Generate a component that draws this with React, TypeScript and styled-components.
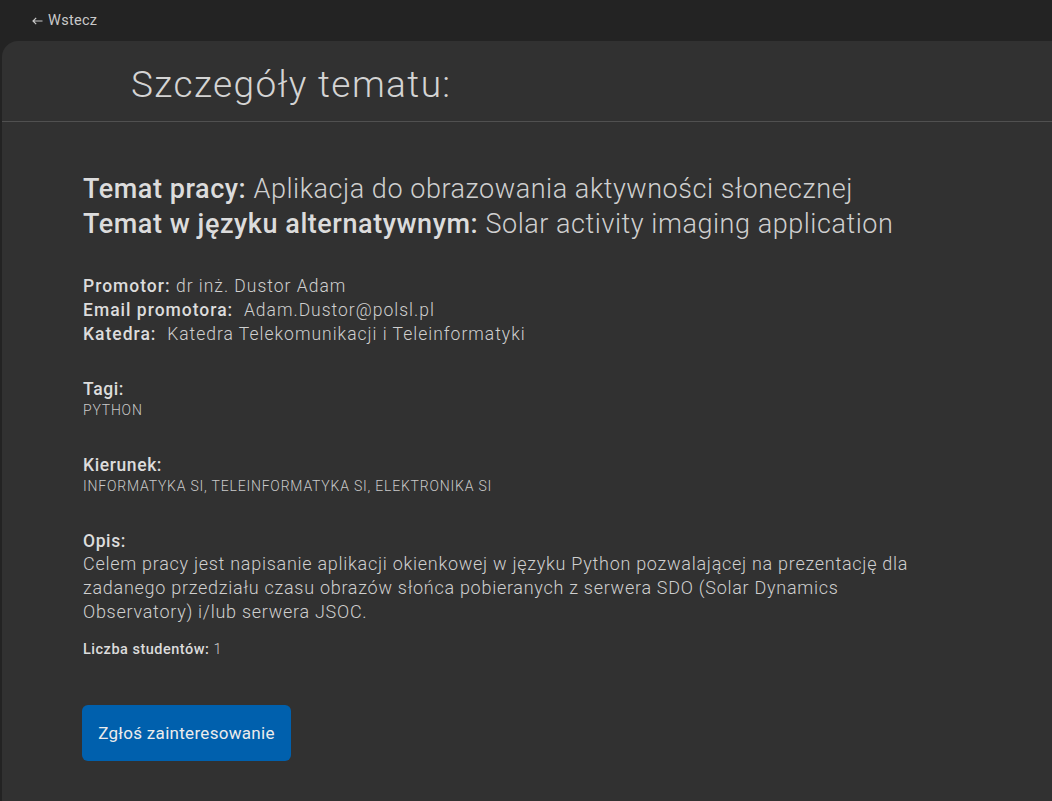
import React from "react";
import styled, { createGlobalStyle } from "styled-components";

const GlobalStyle = createGlobalStyle`
  html, body {
    margin: 0;
    padding: 0;
    background: #232323;
    font-family: Roboto, "Liberation Sans", sans-serif;
    color: #d2d2d2;
  }
  * { box-sizing: border-box; }
`;

const Page = styled.div`
  min-height: 801px;
  display: flex;
  flex-direction: column;
  background: #232323;
`;

const TopBar = styled.div`
  height: 41px;
  display: flex;
  align-items: center;
  padding-left: 32px;
`;

const BackLink = styled.a`
  display: inline-flex;
  align-items: center;
  gap: 5px;
  font-size: 14.5px;
  color: #c9c9c9;
  text-decoration: none;
  cursor: pointer;
  letter-spacing: 0.3px;
`;

const Card = styled.div`
  flex: 1;
  margin-left: 2px;
  background: #313131;
  border-top-left-radius: 16px;
  overflow: hidden;
`;

const Header = styled.div`
  height: 81px;
  display: flex;
  align-items: center;
  padding: 6px 0 0 129px;
  border-bottom: 1px solid #505050;
`;

const Title = styled.h1`
  margin: 0;
  font-size: 37px;
  font-weight: 300;
  color: #d4d4d4;
  letter-spacing: 1.4px;
`;

const Body = styled.div`
  padding: 50px 0 40px 81px;
  display: flex;
  flex-direction: column;
`;

const TopicBlock = styled.div`
  font-size: 27px;
  line-height: 35px;
  letter-spacing: 0.55px;
  margin-bottom: 32px;
`;

const Label = styled.span`
  font-weight: 500;
  color: #dcdcdc;
`;

const Value = styled.span`
  font-weight: 300;
  color: #cfcfcf;
`;

const InfoBlock = styled.div`
  font-size: 17.5px;
  line-height: 24px;
  letter-spacing: 1px;
  margin-bottom: 32px;
`;

const Section = styled.div`
  margin-bottom: 33px;
`;

const SectionLabel = styled.div`
  font-size: 17.5px;
  line-height: 22px;
  font-weight: 500;
  color: #dcdcdc;
  letter-spacing: 0.6px;
`;

const SmallCaps = styled.div`
  font-size: 14px;
  line-height: 21px;
  font-weight: 300;
  color: #cacaca;
  letter-spacing: 0.8px;
`;

const Paragraph = styled.div`
  font-size: 18px;
  line-height: 24px;
  font-weight: 300;
  color: #cfcfcf;
  max-width: 860px;
  letter-spacing: 0.72px;
`;

const Count = styled.div`
  font-size: 14.5px;
  line-height: 18px;
  margin-top: -16px;
  letter-spacing: 0.5px;
`;

const Button = styled.button`
  margin-top: 46px;
  align-self: flex-start;
  width: 209px;
  height: 56px;
  margin-left: -1px;
  border: none;
  border-radius: 6px;
  background: #0060ad;
  color: #ececec;
  font-family: Roboto, "Liberation Sans", sans-serif;
  font-size: 17px;
  letter-spacing: 0.3px;
  cursor: pointer;
`;

function ArrowLeft() {
  return (
    <svg width="11" height="8" viewBox="0 0 11 8" fill="none" stroke="#c9c9c9" strokeWidth="1.2">
      <path d="M10.5 4H1M4.2 0.8L1 4l3.2 3.2" />
    </svg>
  );
}

export default function App() {
  return (
    <>
      <GlobalStyle />
      <Page>
        <TopBar>
          <BackLink>
            <ArrowLeft />
            Wstecz
          </BackLink>
        </TopBar>
        <Card>
          <Header>
            <Title>Szczegóły tematu:</Title>
          </Header>
          <Body>
            <TopicBlock>
              <div>
                <Label>Temat pracy:</Label> <Value>Aplikacja do obrazowania aktywności słonecznej</Value>
              </div>
              <div>
                <Label>Temat w języku alternatywnym:</Label> <Value>Solar activity imaging application</Value>
              </div>
            </TopicBlock>
            <InfoBlock>
              <div>
                <Label>Promotor:</Label> <Value>dr inż. Dustor Adam</Value>
              </div>
              <div>
                <Label>Email promotora:</Label>&nbsp; <Value>Adam.Dustor@polsl.pl</Value>
              </div>
              <div>
                <Label>Katedra:</Label>&nbsp; <Value>Katedra Telekomunikacji i Teleinformatyki</Value>
              </div>
            </InfoBlock>
            <Section>
              <SectionLabel>Tagi:</SectionLabel>
              <SmallCaps>PYTHON</SmallCaps>
            </Section>
            <Section>
              <SectionLabel>Kierunek:</SectionLabel>
              <SmallCaps>INFORMATYKA SI, TELEINFORMATYKA SI, ELEKTRONIKA SI</SmallCaps>
            </Section>
            <Section>
              <SectionLabel>Opis:</SectionLabel>
              <Paragraph>
                Celem pracy jest napisanie aplikacji okienkowej w języku Python pozwalającej na prezentację dla
                zadanego przedziału czasu obrazów słońca pobieranych z serwera SDO (Solar Dynamics
                Observatory) i/lub serwera JSOC.
              </Paragraph>
            </Section>
            <Count>
              <Label>Liczba studentów:</Label> <Value>1</Value>
            </Count>
            <Button>Zgłoś zainteresowanie</Button>
          </Body>
        </Card>
      </Page>
    </>
  );
}
